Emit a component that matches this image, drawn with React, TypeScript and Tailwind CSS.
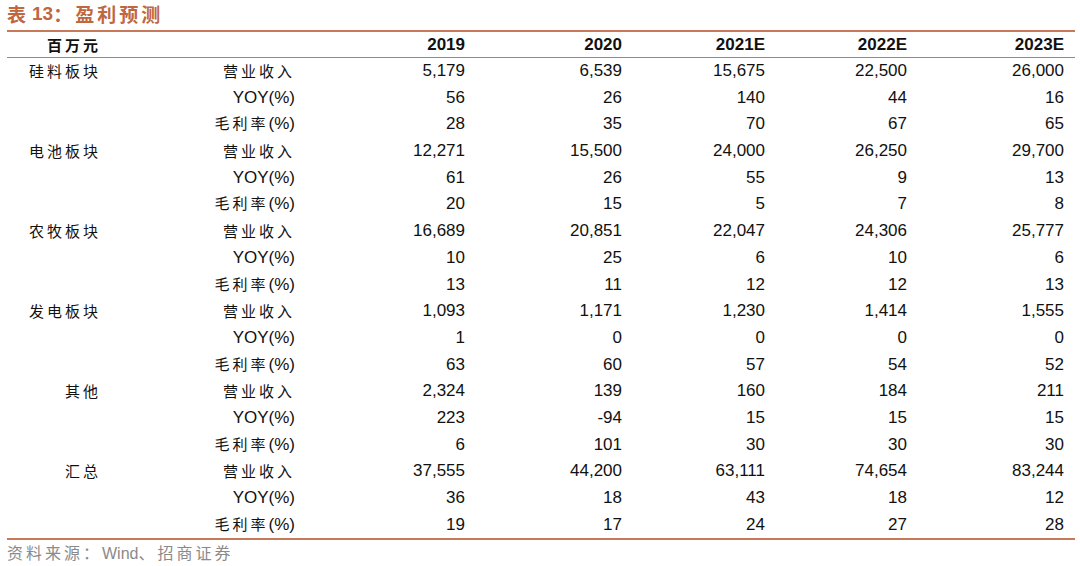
const rows: [string, string, string[]][] = [
  ['硅料板块', '营业收入', ['5,179', '6,539', '15,675', '22,500', '26,000']],
  ['', 'YOY(%)', ['56', '26', '140', '44', '16']],
  ['', '毛利率(%)', ['28', '35', '70', '67', '65']],
  ['电池板块', '营业收入', ['12,271', '15,500', '24,000', '26,250', '29,700']],
  ['', 'YOY(%)', ['61', '26', '55', '9', '13']],
  ['', '毛利率(%)', ['20', '15', '5', '7', '8']],
  ['农牧板块', '营业收入', ['16,689', '20,851', '22,047', '24,306', '25,777']],
  ['', 'YOY(%)', ['10', '25', '6', '10', '6']],
  ['', '毛利率(%)', ['13', '11', '12', '12', '13']],
  ['发电板块', '营业收入', ['1,093', '1,171', '1,230', '1,414', '1,555']],
  ['', 'YOY(%)', ['1', '0', '0', '0', '0']],
  ['', '毛利率(%)', ['63', '60', '57', '54', '52']],
  ['其他', '营业收入', ['2,324', '139', '160', '184', '211']],
  ['', 'YOY(%)', ['223', '-94', '15', '15', '15']],
  ['', '毛利率(%)', ['6', '101', '30', '30', '30']],
  ['汇总', '营业收入', ['37,555', '44,200', '63,111', '74,654', '83,244']],
  ['', 'YOY(%)', ['36', '18', '43', '18', '12']],
  ['', '毛利率(%)', ['19', '17', '24', '27', '28']],
];

const years = ['2019', '2020', '2021E', '2022E', '2023E'];

const cols = 'grid grid-cols-[94px_194px_170px_157px_143px_142px_157px_11px]';
const cn = "font-['Noto_Sans_CJK_SC',sans-serif]";
const num = "font-['Liberation_Sans',Arial,sans-serif]";

// 把 "毛利率(%)" 之类拆成中文和符号两部分
function Label({ text }: { text: string }) {
  const m = text.match(/^([\u4e00-\u9fa5]*)(.*)$/);
  const zh = m ? m[1] : '';
  const rest = m ? m[2] : text;
  return (
    <span className="whitespace-nowrap">
      {zh && <span className={`${cn} text-[15px] tracking-[3px]`}>{zh}</span>}
      {rest && <span className={`${num} text-[17px]`}>{rest}</span>}
    </span>
  );
}

export default function App() {
  return (
    <div className="w-[1080px] h-[566px] bg-white text-[#111] overflow-hidden">
      <div className="pl-[7px] pr-[5px]">
        <div className="h-[30px] flex items-center text-[#c0673f] font-bold text-[19px] pb-[1px]">
          <span className={cn}>表</span>
          <span className={`${num} ml-[6px]`}>13</span>
          <span className={`${cn} tracking-[3px]`}>：盈利预测</span>
        </div>
        <div className="border-t-2 border-[#c8795a]">
          <div className={`${cols} h-[26px] items-center border-b border-[#c8795a] font-bold pb-[1px]`}>
            <div className={`${cn} text-[15px] tracking-[3px] text-right`}>百万元</div>
            <div />
            {years.map((y) => (
              <div key={y} className={`${num} text-[17px] text-right`}>{y}</div>
            ))}
            <div />
          </div>
          <div className="border-b-2 border-[#c8795a]">
            {rows.map(([cat, label, vals], i) => (
              <div key={i} className={`${cols} h-[26.7px] items-center pb-[3px]`}>
                <div className={`${cn} text-[15px] tracking-[3px] text-right whitespace-nowrap`}>{cat}</div>
                <div className="text-right">
                  <Label text={label} />
                </div>
                {vals.map((v, j) => (
                  <div key={j} className={`${num} text-[17px] text-right`}>{v}</div>
                ))}
                <div />
              </div>
            ))}
          </div>
        </div>
        <div className={`${cn} text-[16px] text-[#8a8a8a] tracking-[3px] mt-[0px]`}>
          资料来源：<span className={`${num} tracking-normal`}>Wind</span>、招商证券
        </div>
      </div>
    </div>
  );
}
